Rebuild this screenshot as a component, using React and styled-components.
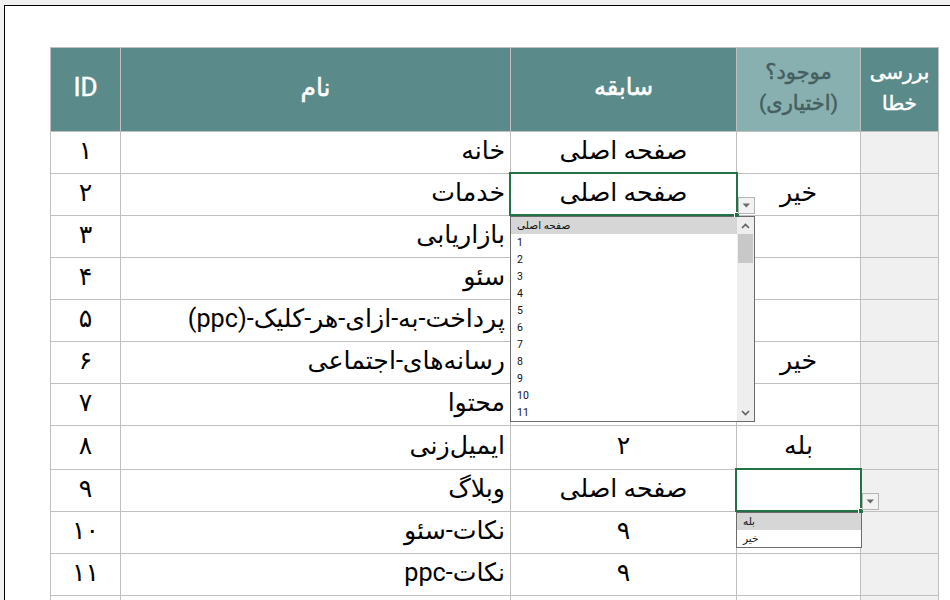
import React from "react";
import styled, { createGlobalStyle } from "styled-components";

const Global = createGlobalStyle`
  html, body { margin: 0; padding: 0; background: #f0f0f0; overflow: hidden; }
`;
const FONT = `Roboto, "DejaVu Sans", sans-serif`;
const GRID = "#bfbfbf";
const GREEN = "#217346";

const Sheet = styled.div`
  margin: 5px 0 0 4px;
  height: 595px;
  box-sizing: border-box;
  background: #fff;
  border-top: 1px solid #000;
  border-left: 1px solid #000;
  padding: 41px 0 0 45px;
  overflow: hidden;
  font-family: ${FONT};
`;
const Table = styled.table`
  border-collapse: separate;
  border-spacing: 0;
  table-layout: fixed;
  width: 889px;
`;
const HeadCell = styled.th`
  box-sizing: border-box;
  height: 84px;
  padding: 0 2px 4px;
  background: ${p => (p.$light ? "#89b0b0" : "#5a8a8a")};
  color: ${p => (p.$light ? "#455f5f" : "#fff")};
  border-top: 1px solid ${GRID};
  border-left: 1px solid ${GRID};
  border-right: ${p => (p.$last ? `1px solid ${GRID}` : "0")};
  font-size: ${p => p.$size}px;
  font-weight: 400;
  -webkit-text-stroke: 0.5px currentColor;
  line-height: 31px;
  text-align: center;
  vertical-align: middle;
  white-space: nowrap;
`;
const Cell = styled.td`
  box-sizing: border-box;
  position: relative;
  height: ${p => p.$h}px;
  padding: ${p => (p.$name ? "0 4px 3px 0" : "0 0 3px")};
  border-top: 1px solid ${GRID};
  border-left: 1px solid ${GRID};
  border-right: ${p => (p.$last ? `1px solid ${GRID}` : "0")};
  background: ${p => (p.$last ? "#f0f0f0" : "#fff")};
  color: #000;
  font-size: 25.2px;
  line-height: 1;
  text-align: ${p => (p.$name ? "right" : "center")};
  vertical-align: middle;
  white-space: nowrap;
`;
const Selection = styled.div`
  position: absolute;
  left: -2px;
  right: -2px;
  top: -2px;
  bottom: -1px;
  border: 2px solid ${GREEN};
  pointer-events: none;
  z-index: 3;
  &::after {
    content: "";
    position: absolute;
    right: -3px;
    bottom: -3px;
    width: 4px;
    height: 4px;
    background: ${GREEN};
    border: 1px solid #fff;
    border-width: 1px 0 0 1px;
  }
`;
const DropButton = styled.div`
  position: absolute;
  left: calc(100% + 2px);
  bottom: 1px;
  width: 17px;
  height: 17px;
  box-sizing: border-box;
  border: 1px solid #b5b5b5;
  background: #f2f2f2;
  display: flex;
  align-items: center;
  justify-content: center;
  z-index: 4;
`;
const Popup = styled.div`
  position: absolute;
  top: calc(100% + 1px);
  left: -1px;
  width: ${p => p.$w}px;
  height: ${p => p.$h}px;
  box-sizing: border-box;
  border: 1px solid #6b6b6b;
  background: #fff;
  display: flex;
  direction: ltr;
  z-index: 2;
  text-align: left;
`;
const List = styled.ul`
  flex: 1;
  margin: 0;
  padding: 0;
  list-style: none;
  overflow: hidden;
`;
const Item = styled.li`
  box-sizing: border-box;
  height: 17px;
  padding: 1px 0 0 6px;
  line-height: 16px;
  font-family: ${FONT};
  font-size: 10.5px;
  color: #111;
  background: ${p => (p.$active ? "#d6d6d6" : "transparent")};
`;
const ScrollBar = styled.div`
  width: 17px;
  background: #eeeeee;
  display: flex;
  flex-direction: column;
  justify-content: flex-start;
`;
const ScrollArrow = styled.div`
  height: 17px;
  flex: none;
  display: flex;
  align-items: center;
  justify-content: center;
  margin-top: ${p => (p.$end ? "auto" : "0")};
`;
const Thumb = styled.div`
  height: 29px;
  margin: 0 1px;
  background: #c8c8c8;
`;

const Tri = () => (
  <svg width="9" height="5" viewBox="0 0 9 5"><path d="M0.5 0.5h7.5L4.25 4.5z" fill="#6a6a6a" /></svg>
);
const Chev = ({ up }) => (
  <svg width="9" height="6" viewBox="0 0 9 6">
    <path d={up ? "M1 5L4.5 1.5L8 5" : "M1 1L4.5 4.5L8 1"} fill="none" stroke="#606060" strokeWidth="1.6" />
  </svg>
);

const HOME = "صفحه اصلی";
const rows = [
  ["۱", "خانه", HOME, ""],
  ["۲", "خدمات", HOME, "خیر"],
  ["۳", "بازاریابی", "", ""],
  ["۴", "سئو", "", ""],
  ["۵", "پرداخت-به-ازای-هر-کلیک-(ppc)", "", ""],
  ["۶", "رسانه‌های-اجتماعی", "", "خیر"],
  ["۷", "محتوا", "", ""],
  ["۸", "ایمیل‌زنی", "۲", "بله", 44],
  ["۹", "وبلاگ", HOME, ""],
  ["۱۰", "نکات-سئو", "۹", ""],
  ["۱۱", "نکات-ppc", "۹", ""],
  ["", "", "", ""],
];
const longList = [HOME, "1", "2", "3", "4", "5", "6", "7", "8", "9", "10", "11"];

const Dropdown = ({ items, w, h, scroll }) => (
  <>
    <Selection />
    <DropButton><Tri /></DropButton>
    <Popup $w={w} $h={h}>
      <List>
        {items.map((t, i) => <Item key={t} $active={i === 0} dir="auto">{t}</Item>)}
      </List>
      {scroll && (
        <ScrollBar>
          <ScrollArrow><Chev up /></ScrollArrow>
          <Thumb />
          <ScrollArrow $end><Chev /></ScrollArrow>
        </ScrollBar>
      )}
    </Popup>
  </>
);

export default function App() {
  return (
    <Sheet>
      <Global />
      <Table>
        <colgroup>
          <col style={{ width: 70 }} />
          <col style={{ width: 390 }} />
          <col style={{ width: 226 }} />
          <col style={{ width: 124 }} />
          <col style={{ width: 79 }} />
        </colgroup>
        <thead>
          <tr>
            <HeadCell $size={26}>ID</HeadCell>
            <HeadCell $size={25}>نام</HeadCell>
            <HeadCell $size={24}>سابقه</HeadCell>
            <HeadCell $light $size={21}>موجود؟<br />(اختیاری)</HeadCell>
            <HeadCell $last $size={20}>بررسی<br />خطا</HeadCell>
          </tr>
        </thead>
        <tbody>
          {rows.map((r, i) => {
            const h = r[4] || 42;
            return (
              <tr key={i}>
                <Cell $h={h}>{r[0]}</Cell>
                <Cell $h={h} $name dir="rtl">{r[1]}</Cell>
                <Cell $h={h}>
                  {r[2]}
                  {i === 1 && <Dropdown items={longList} w={245} h={206} scroll />}
                </Cell>
                <Cell $h={h}>
                  {r[3]}
                  {i === 8 && <Dropdown items={["بله", "خیر"]} w={126} h={36} />}
                </Cell>
                <Cell $h={h} $last />
              </tr>
            );
          })}
        </tbody>
      </Table>
    </Sheet>
  );
}
